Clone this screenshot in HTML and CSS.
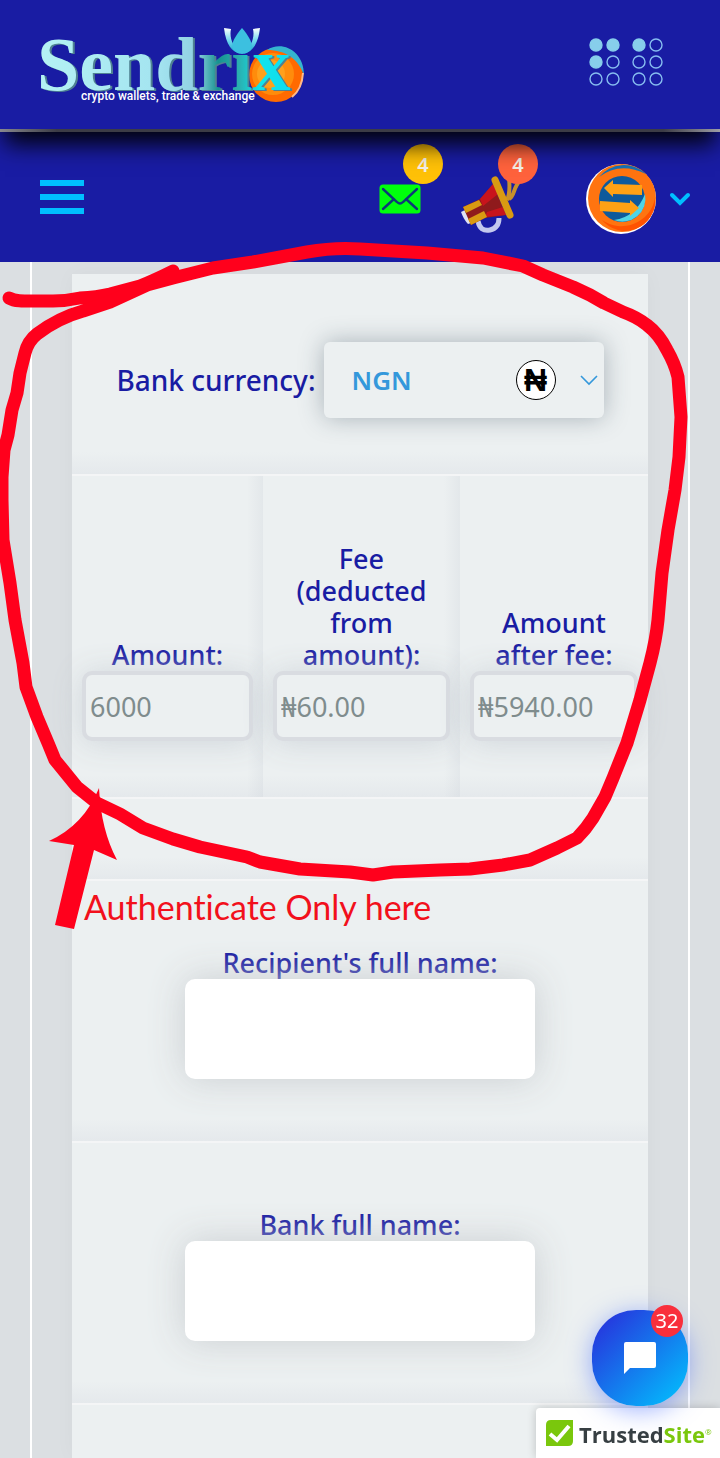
FILE: index.html
```html
<!DOCTYPE html>
<html lang="en">
<head>
<meta charset="utf-8">
<meta name="viewport" content="width=device-width, initial-scale=1">
<title>Sendrix</title>
<link rel="stylesheet" href="styles.css">
</head>
<body>
<header class="brand-bar">
  <a class="logo" href="#" aria-label="Sendrix home">
    <svg width="290" height="96" viewBox="0 0 290 96">
      <defs>
        <linearGradient id="word" gradientUnits="userSpaceOnUse" x1="0" y1="0" x2="262" y2="0">
          <stop offset="0" stop-color="#b4f2f4"/>
          <stop offset=".45" stop-color="#a4e4f0"/>
          <stop offset=".6" stop-color="#8fd0e2"/>
          <stop offset=".68" stop-color="#16938f"/>
          <stop offset=".76" stop-color="#2ab0b0"/>
          <stop offset=".84" stop-color="#10e4ec"/>
          <stop offset="1" stop-color="#10d8f0"/>
        </linearGradient>
        <linearGradient id="petal" x1="0" y1="0" x2="0" y2="1">
          <stop offset="0" stop-color="#ffffff"/>
          <stop offset=".5" stop-color="#6cd6ee"/>
          <stop offset="1" stop-color="#109cc8"/>
        </linearGradient>
      </defs>
      <circle cx="236" cy="50" r="27" fill="#ff6a00"/>
      <circle cx="233" cy="49" r="21" fill="#ff8c0c"/>
      <circle cx="231" cy="49" r="14" fill="#ffa01c"/>
      <path d="M227 25C242 15 264 26 264 50C258 34 246 25 227 25Z" fill="#35b5cf"/>
      <path d="M252 72Q262 64 263 48" fill="none" stroke="#ffb98a" stroke-width="2"/>
      <text class="wordmark" x="-3" y="65" fill="url(#word)">Sendrix</text>
      <path d="M184 3C186 20 192 27 201 29C193 22 189 13 191 4ZM220 3C218 20 212 27 203 29C211 22 215 13 213 4Z" fill="url(#petal)"/>
      <path d="M202 3C190 17 188 27 202 29C216 27 214 17 202 3Z" fill="#3cc0e0"/>
      <text class="tagline" x="41" y="75">crypto wallets, trade &amp; exchange</text>
    </svg>
  </a>
  <button class="dots" type="button" aria-label="Apps">
    <svg width="76" height="50" viewBox="0 0 76 50" fill="none" stroke="#87bdf0" stroke-width="1.4">
      <g fill="#87ceeb" stroke="#87ceeb"><circle cx="8" cy="8" r="6"/><circle cx="25" cy="8" r="6"/><circle cx="8" cy="25" r="6"/><circle cx="51" cy="8" r="6"/></g>
      <circle cx="68" cy="8" r="6"/><circle cx="25" cy="25" r="6"/><circle cx="51" cy="25" r="6"/><circle cx="68" cy="25" r="6"/>
      <circle cx="8" cy="42" r="6"/><circle cx="25" cy="42" r="6"/><circle cx="51" cy="42" r="6"/><circle cx="68" cy="42" r="6"/>
    </svg>
  </button>
</header>
<nav class="tool-bar">
  <button class="menu" type="button" aria-label="Menu"><span></span><span></span><span></span></button>
  <div class="tools">
    <button class="tool mail" type="button" aria-label="Messages">
      <svg width="42" height="30" viewBox="0 0 42 30">
        <rect x=".5" y=".5" width="41" height="29" rx="3.5" fill="#00ff0c"/>
        <path d="M4 5L18 18Q21 21 24 18L38 5M4 25L15 15M38 25L27 15" fill="none" stroke="#0d3a78" stroke-width="2.4" stroke-linecap="round"/>
      </svg>
      <span class="count amber">4</span>
    </button>
    <button class="tool horn" type="button" aria-label="Announcements">
      <svg width="68" height="58" viewBox="0 0 68 58">
        <path d="M49 2C50 12 50 18 47 24M60 5C53 11 55 20 49 23" fill="none" stroke="#c8902a" stroke-width="4"/>
        <path d="M18 45Q20 56 30 54Q39 52 39 42" fill="none" stroke="#c3c8ee" stroke-width="5"/>
        <path d="M1 36L5 34L11 47L8 48Q4 44 1 36Z" fill="#dfe2f5"/>
        <path d="M3 31L20 23L33 8L46 39L25 42L11 49Z" fill="#8f1a1c"/>
        <path d="M20 23L33 8L38 18L23 30ZM27 36L43 31L46 39L25 41Z" fill="#c8141c"/>
        <path d="M3 31L19 24L22 29L6 37ZM8 43L24 35L27 41L11 49Z" fill="#d99a12"/>
        <path d="M35 4L50 39" stroke="#d99a12" stroke-width="7" stroke-linecap="round"/>
      </svg>
      <span class="count coral">4</span>
    </button>
    <button class="account" type="button" aria-label="Account">
      <svg width="70" height="70" viewBox="0 0 70 70">
        <circle cx="35" cy="35" r="35" fill="#fff"/>
        <circle cx="36" cy="34" r="34" fill="#ff7410"/>
        <path d="M13 13A32 32 0 0 1 60 10Q34 -3 13 13Z" fill="#1672b4"/>
        <path d="M16 56A30 30 0 0 0 69 34A34 34 0 0 1 16 56Z" fill="#ff5200"/>
        <circle cx="36" cy="35" r="23" fill="#0e5a9c"/>
        <path d="M59 30A23 23 0 0 1 28 56Q50 53 59 30Z" fill="#4fd5e6"/>
        <path d="M18 24L27 16V20L56 21V31L27 30V33ZM53 44L44 36V39L14 37V47L44 49V52Z" fill="#ffa114"/>
      </svg>
      <svg class="caret" width="20" height="14" viewBox="0 0 20 14"><path d="M2 3L10 11L18 3" fill="none" stroke="#00bfff" stroke-width="4" stroke-linecap="round"/></svg>
    </button>
  </div>
</nav>
<main class="frame">
  <form class="card">
    <section class="row currency">
      <label for="currency">Bank currency:</label>
      <div class="picker">
        <select id="currency"><option>NGN</option></select>
        <span class="coin">₦</span>
        <svg class="arrow" width="18" height="12" viewBox="0 0 18 12"><path d="M1 2L9 10L17 2" fill="none" stroke="#3498db" stroke-width="1.6"/></svg>
      </div>
    </section>
    <section class="row amounts">
      <div class="cell"><label for="amount">Amount:</label><input id="amount" type="text" value="6000" readonly></div>
      <div class="cell"><label for="fee">Fee (deducted from amount):</label><input id="fee" type="text" value="₦60.00" readonly></div>
      <div class="cell"><label for="net">Amount after fee:</label><input id="net" type="text" value="₦5940.00" readonly></div>
    </section>
    <section class="row spacer"></section>
    <section class="row field"><label for="recipient">Recipient's full name:</label><input id="recipient" type="text"></section>
    <section class="row field"><label for="bank">Bank full name:</label><input id="bank" type="text"></section>
    <section class="row rest"></section>
  </form>
</main>
<svg class="markup" viewBox="0 0 720 1458">
  <path class="loop" d="M9 298C16 302 24 301 53 301Q66 301 80 298Q97 297 110 294L140 286Q155 280 173 271"/>
  <path class="loop" d="M173 278L147 285L110 302L83 311Q58 318 37 334Q28 341 25 353L20 373L17 393L12 410L8 435L4 450L2 477V500L3 540L10 583L15 620L23 663L26 687L37 717L48 743L55 760L77 787L97 803L120 814L143 828L173 839L200 847L247 857L260 862L300 869L350 872L373 875L393 872L440 870L470 869L503 865L530 860L557 848L577 838Q586 829 593 818L605 797L613 778L627 743L640 700L650 663Q656 640 658 620L662 573L668 530L675 490L679 457L681 417L678 377Q675 364 667 350Q659 334 647 325Q637 317 623 312L604 303L590 295L573 287L543 275L523 266L483 258L427 253L360 249Q335 247 307 252L253 262L213 268L173 278"/>
  <path class="pointer" d="M99 788Q101 830 117 860L94 850L74 929L55 925L74 845L49 841Q84 825 99 788Z"/>
  <text class="note" x="84" y="920">Authenticate Only here</text>
</svg>
<button class="chat" type="button" aria-label="Open chat">
  <svg width="32" height="32" viewBox="0 0 32 32"><path d="M2 0H30Q32 0 32 2V24Q32 26 30 26H6L0 32V2Q0 0 2 0Z" fill="#fff"/></svg>
  <span class="unread">32</span>
</button>
<a class="trusted" href="#">
  <svg width="27" height="26" viewBox="0 0 27 26"><path d="M5 0H27V21Q27 26 22 26H0V5Q0 0 5 0Z" fill="#7ac70c"/><path d="M4 14L11 20L23 6" fill="none" stroke="#fff" stroke-width="4"/></svg>
  <span class="trusted-name">Trusted<span>Site</span><sup>®</sup></span>
</a>
</body>
</html>
```
FILE: styles.css
```css
* { box-sizing: border-box; }
body {
  margin: 0;
  min-height: 100vh;
  display: flex;
  flex-direction: column;
  position: relative;
  background: #dbdfe2;
  color: #191ca3;
  font-family: "Noto Sans", "Open Sans", sans-serif;
}
button { border: 0; padding: 0; background: none; font: inherit; cursor: pointer; }
svg { display: block; flex: none; overflow: visible; }

.brand-bar {
  position: relative;
  z-index: 2;
  display: flex;
  justify-content: space-between;
  align-items: flex-start;
  height: 132px;
  padding: 25px 56px 0 40px;
  background: #191ca3;
  border-bottom: 3px solid;
  border-image: linear-gradient(to right, #8a8a90, #3c3c46 8%, #3c3c46 92%, #a0a0a8) 1;
  box-shadow: 0 17px 22px -5px rgba(0, 0, 0, .95);
}
.wordmark { font: bold 76px "Liberation Serif", serif; filter: drop-shadow(2px 1px 0 #4f8292); }
.tagline { font: 500 12px Roboto, sans-serif; fill: #fff; }
.dots { margin-top: 12px; }

.tool-bar {
  display: flex;
  justify-content: space-between;
  align-items: center;
  height: 130px;
  padding: 0 30px 0 40px;
  background: #191ca3;
}
.menu { display: grid; gap: 8px; width: 44px; }
.menu span { height: 6px; background: #00bfff; }
.tools { display: flex; align-items: center; padding-top: 4px; }
.tool { position: relative; }
.horn { margin: 12px 58px 0 39px; }
.count {
  position: absolute;
  display: grid;
  place-items: center;
  width: 40px;
  height: 40px;
  border-radius: 50%;
  color: #f3eee6;
  font-size: 20px;
  font-weight: 600;
}
.amber { background: #ffc107; left: 24px; bottom: 30px; }
.coral { background: #ff623c; left: 38px; bottom: 50px; }
.account { display: flex; align-items: center; gap: 14px; }

.frame {
  flex: 1;
  display: flex;
  margin: 0 30px;
  padding: 12px 40px 0;
  border: solid #fff;
  border-width: 0 2px;
}
.card {
  flex: 1;
  display: flex;
  flex-direction: column;
  background: #ecf0f1;
  box-shadow: 0 0 20px rgba(0, 0, 0, .03);
}
.row {
  border-bottom: 2px solid #f4f5f6;
  background: linear-gradient(#ecf0f1 calc(100% - 22px), #e5e9ec);
}
label { font-size: 27px; font-weight: 500; line-height: 32px; text-align: center; }
input, select { font: inherit; position: relative; border: 0; outline: 0; }

.currency {
  display: flex;
  justify-content: center;
  align-items: center;
  gap: 8px;
  min-height: 202px;
  padding-top: 12px;
}
.currency label { font-size: 28px; }
.picker { position: relative; width: 280px; }
.picker select {
  display: block;
  appearance: none;
  width: 100%;
  height: 76px;
  padding: 0 28px;
  border-radius: 6px;
  background: #ecf0f1;
  color: #3498db;
  font-size: 26px;
  font-weight: 600;
  box-shadow: 0 0 24px rgba(44, 62, 80, .35);
}
.coin {
  position: absolute;
  right: 48px;
  top: 18px;
  display: grid;
  place-items: center;
  width: 40px;
  height: 40px;
  border: 1px solid #000;
  border-radius: 50%;
  background: #fff;
  color: #000;
  font: bold 32px/36px "Liberation Sans", sans-serif;
  pointer-events: none;
}
.arrow { position: absolute; right: 6px; top: 32px; pointer-events: none; }

.amounts { display: grid; grid-template-columns: 191fr 197fr 188fr; min-height: 323px; }
.cell {
  display: flex;
  flex-direction: column;
  justify-content: flex-end;
  min-width: 0;
  padding: 0 10px 56px;
  background: linear-gradient(to left, rgba(200, 206, 214, .25), transparent 16px);
}
.cell:last-child { background: none; }
.cell label { padding: 0 16px; }
.cell input {
  width: 100%;
  height: 70px;
  padding: 0 4px;
  border: 4px solid #d9dce1;
  border-radius: 10px;
  background: #ecf0f1;
  background-clip: padding-box;
  color: #7f8c8d;
  font-size: 27px;
  box-shadow: 0 2px 30px rgba(205, 212, 217, .95);
}
.spacer { min-height: 82px; }
.field {
  display: flex;
  flex-direction: column;
  align-items: center;
  padding: 66px 0 62px;
}
.field input {
  width: 350px;
  max-width: 100%;
  height: 100px;
  padding: 0 16px;
  border-radius: 10px;
  background: #fff;
  font-size: 27px;
  box-shadow: 0 0 36px rgba(200, 204, 208, .95);
}
.rest { flex: 1; min-height: 52px; border: 0; background: #ecf0f1; }

.markup { position: absolute; z-index: 3; top: 0; left: 0; width: 100%; pointer-events: none; }
.loop { fill: none; stroke: #ff001c; stroke-width: 13; stroke-linecap: round; stroke-linejoin: round; }
.pointer { fill: #ff001c; }
.note { font: 34px Lato, sans-serif; font-variant-ligatures: none; fill: #f2101c; }

.chat {
  position: fixed;
  z-index: 5;
  right: 32px;
  bottom: 52px;
  display: grid;
  place-items: center;
  width: 96px;
  height: 96px;
  border-radius: 44px;
  background: linear-gradient(135deg, #2a27da, #00c6ff);
  box-shadow: 0 4px 24px rgba(60, 100, 255, .5);
}
.unread {
  position: absolute;
  top: -5px;
  right: 5px;
  width: 32px;
  height: 32px;
  border-radius: 50%;
  background: #f92f3c;
  color: #fff;
  font-size: 20px;
  line-height: 32px;
}
.trusted {
  position: fixed;
  z-index: 4;
  right: 0;
  bottom: 0;
  display: flex;
  align-items: center;
  gap: 6px;
  width: 184px;
  height: 50px;
  padding-left: 10px;
  border-radius: 4px 0 0 0;
  background: #fff;
  color: #373f42;
  text-decoration: none;
  box-shadow: 0 0 10px rgba(0, 0, 0, .2);
}
.trusted-name { font: bold 22px/26px "Noto Sans", sans-serif; white-space: nowrap; }
.trusted-name { font-family: "Open Sans", sans-serif; }
.trusted-name span, .trusted-name sup { color: #7ac70c; }
.trusted-name sup { font-size: 8px; font-weight: normal; }
```
